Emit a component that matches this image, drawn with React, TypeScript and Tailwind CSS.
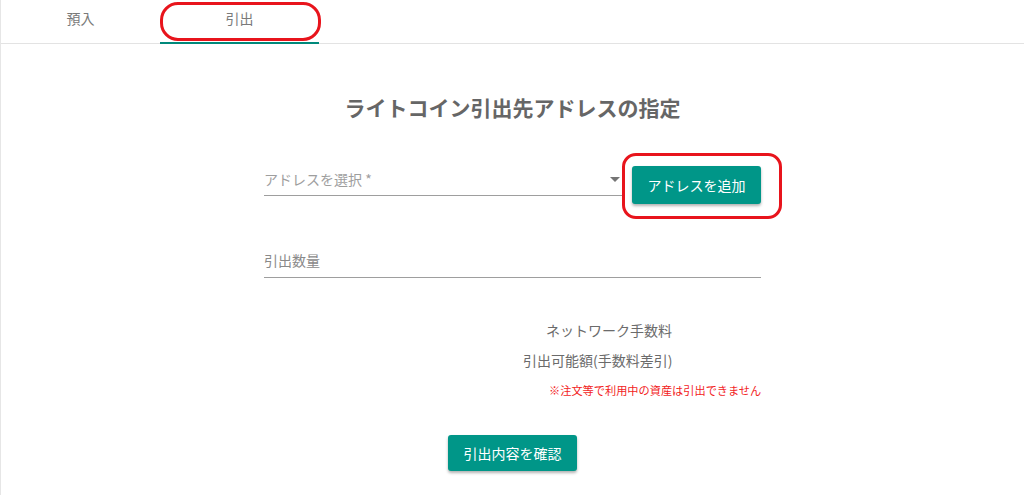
import React from 'react';

const font = { fontFamily: '"Noto Sans CJK JP", "Noto Sans", Roboto, sans-serif' };

// Tab header
function Tabs() {
  return (
    <div className="relative flex h-[44px] border-b border-[#e3e3e3]">
      <div className="flex w-[159px] items-center justify-center pb-[6px] text-[14px] text-[#7a7a7a]">預入</div>
      <div className="relative flex w-[159px] items-center justify-center pb-[6px] text-[14px] text-[#7a7a7a]">
        引出
        <div className="absolute bottom-[-1px] left-0 right-0 h-[2px] bg-[#00897b]" />
      </div>
      {/* annotation */}
      <div className="pointer-events-none absolute left-[159px] top-[2px] h-[39px] w-[161px] rounded-[18px] border-[3px] border-[#e8141c]" />
    </div>
  );
}

function TealButton({ label, className }: { label: string; className?: string }) {
  return (
    <button
      className={
        'rounded-[3px] bg-[#009688] text-[14px] text-white shadow-[0_2px_3px_rgba(0,0,0,0.3)] ' + (className ?? '')
      }
    >
      {label}
    </button>
  );
}

export default function App() {
  return (
    <div className="min-h-[495px] w-full border-l border-[#e6e6e6] bg-white" style={font}>
      <Tabs />

      <div className="flex flex-col items-center">
        <h1 className="mt-[49px] text-[21px] font-bold leading-[28px] text-[#666666]">
          ライトコイン引出先アドレスの指定
        </h1>

        <div className="mt-[45px] w-[497px]">
          {/* address select row */}
          <div className="relative flex items-start">
            <div className="flex h-[30px] w-[358px] items-center justify-between border-b border-[#9e9e9e] pb-[2px]">
              <span className="text-[14px] text-[#9e9e9e]">アドレスを選択 *</span>
              <svg width="10" height="6" viewBox="0 0 10 6" className="mr-[2px]">
                <path d="M0 0h10L5 5z" fill="#757575" />
              </svg>
            </div>
            <TealButton label="アドレスを追加" className="ml-[10px] h-[38px] w-[129px]" />
            {/* annotation */}
            <div className="pointer-events-none absolute left-[358px] top-[-13px] h-[66px] w-[160px] rounded-[14px] border-[3px] border-[#e8141c]" />
          </div>

          {/* amount */}
          <div className="mt-[39px] flex h-[35px] items-center border-b border-[#9e9e9e]">
            <span className="text-[14px] text-[#8a8a8a]">引出数量</span>
          </div>

          <div className="mt-[42px] pl-[282px] text-[14px] leading-[20px] text-[#6b6b6b]">ネットワーク手数料</div>
          <div className="mt-[10px] pl-[259px] text-[14px] leading-[20px] text-[#6b6b6b]">引出可能額(手数料差引)</div>
          <div className="mt-[12px] whitespace-nowrap pl-[285px] text-[11.2px] leading-[16px] text-[#f2231d]">
            ※注文等で利用中の資産は引出できません
          </div>
        </div>

        <TealButton label="引出内容を確認" className="mt-[37px] h-[36px] w-[129px]" />
      </div>
    </div>
  );
}
